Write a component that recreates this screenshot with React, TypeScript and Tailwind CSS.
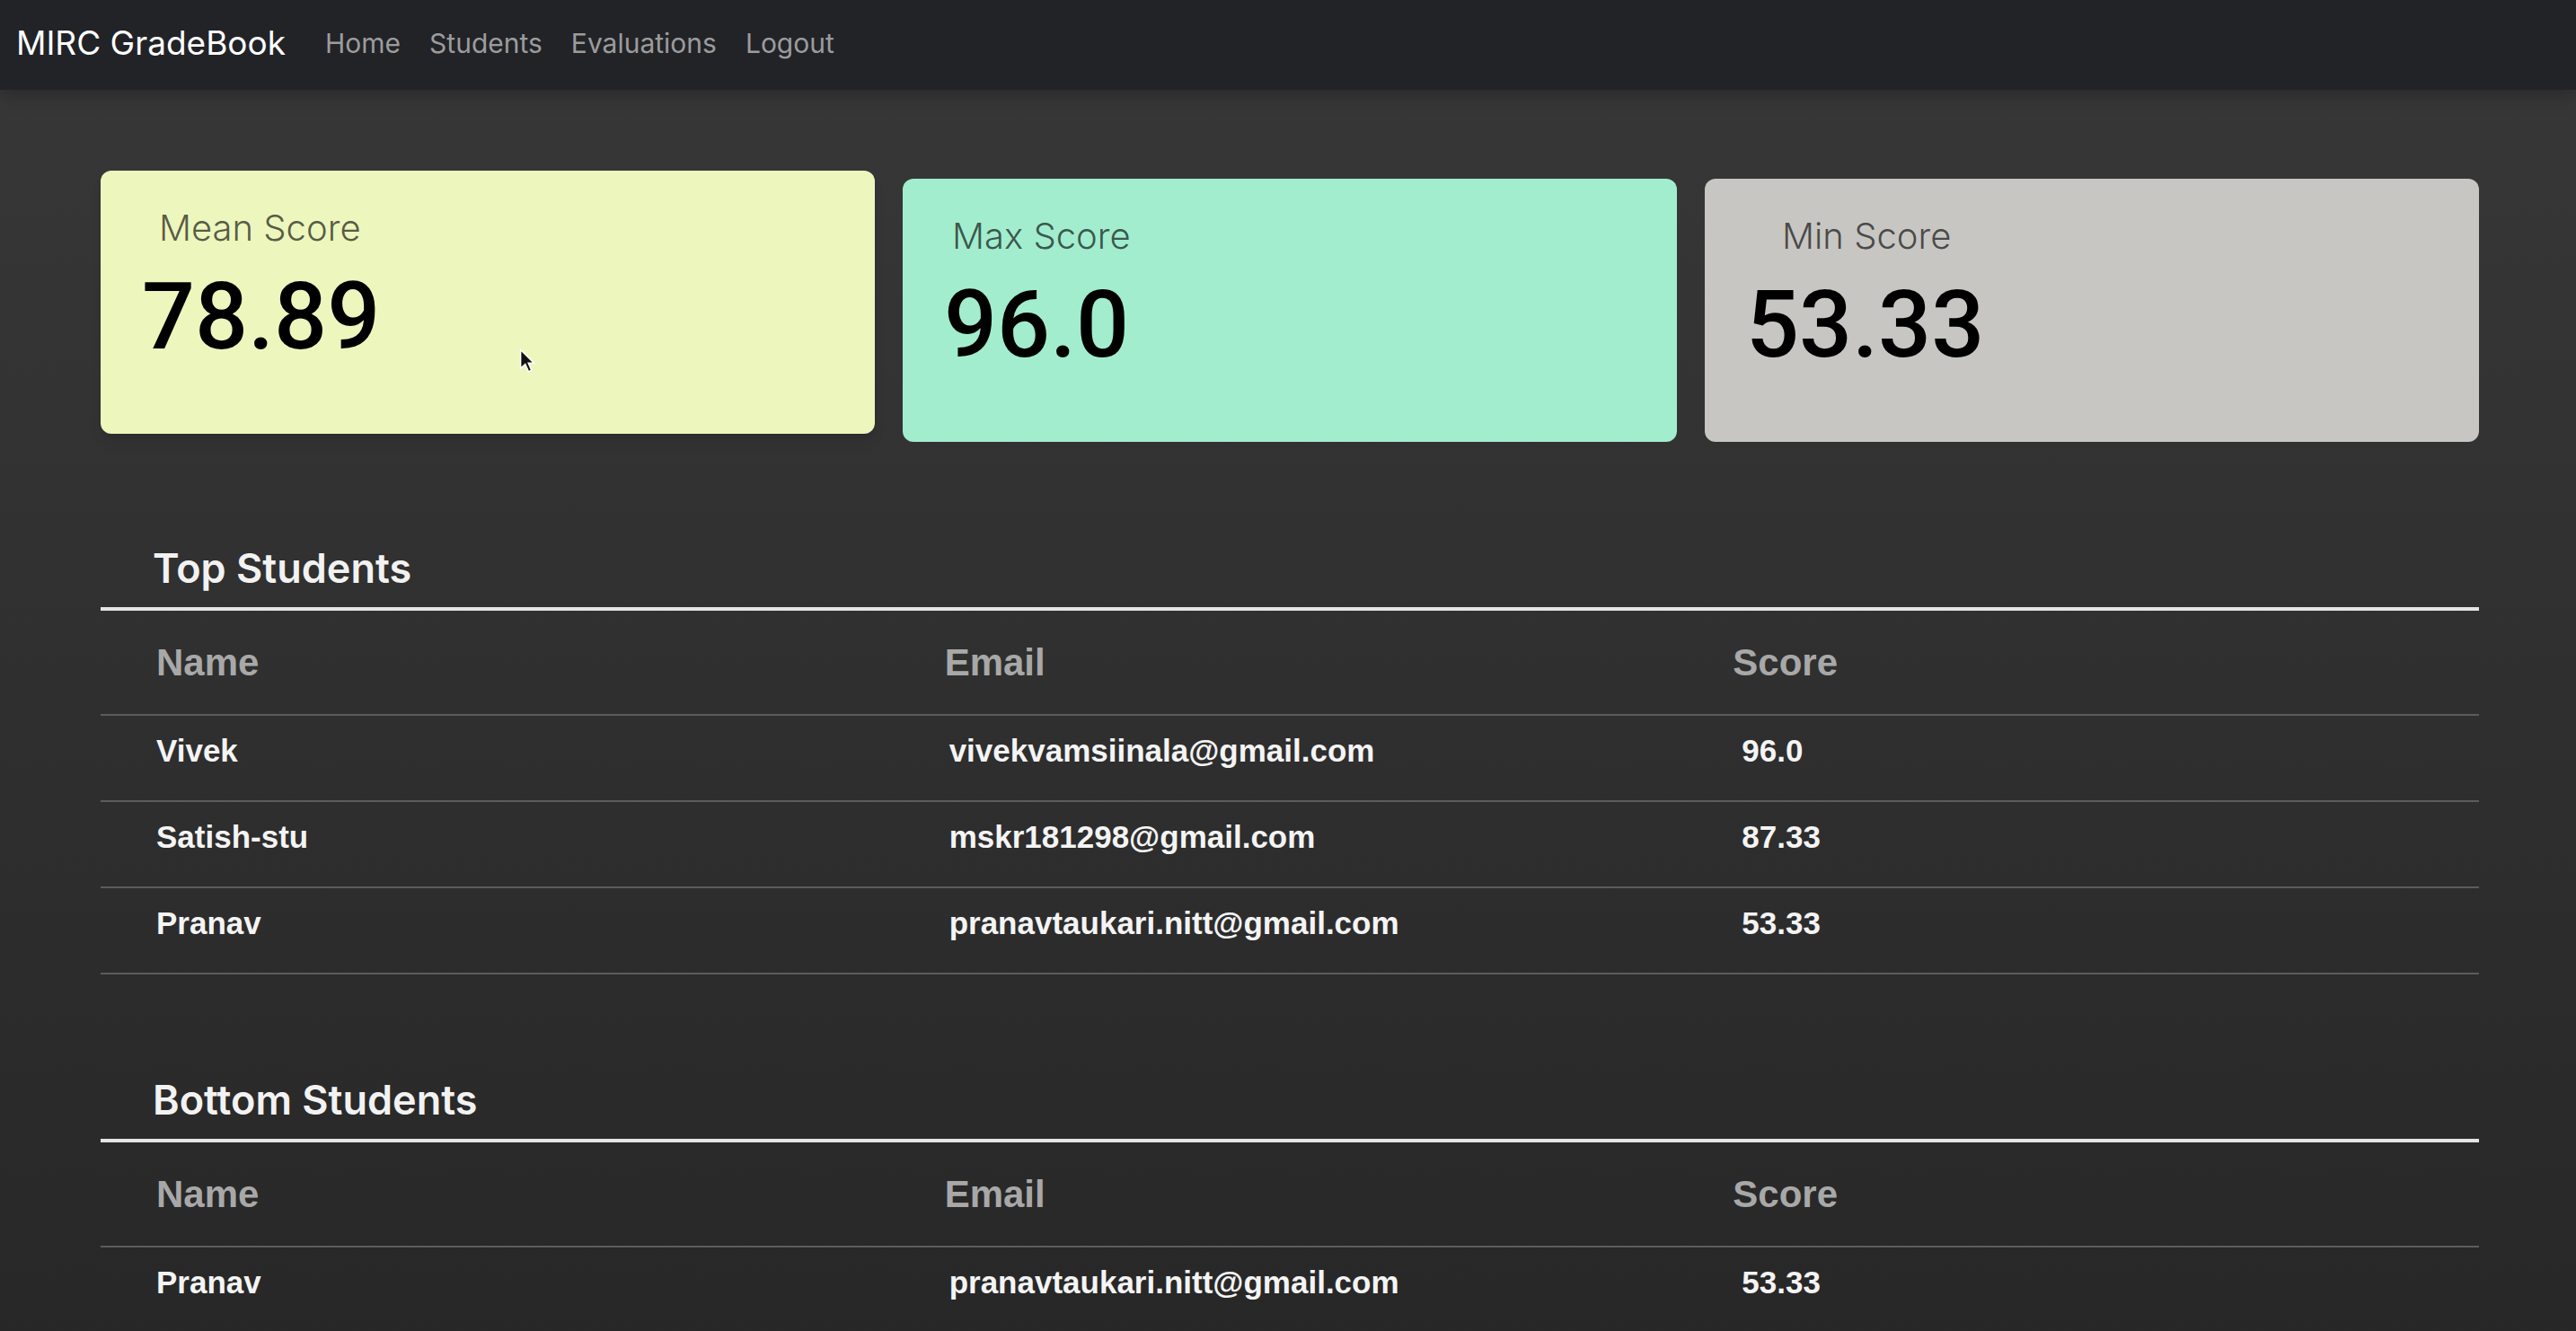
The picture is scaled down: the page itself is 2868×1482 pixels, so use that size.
import React from 'react';

const sans = { fontFamily: 'Inter, "Noto Sans", sans-serif' };
const helv = { fontFamily: '"Liberation Sans", Arial, sans-serif' };
const nums = { fontFamily: 'Roboto, "Liberation Sans", Arial, sans-serif' };

const stats = [
  { label: 'Mean Score', value: '78.89', bg: 'bg-[#edf6bd]', labelPad: 'pl-[65px]', lift: true },
  { label: 'Max Score', value: '96.0', bg: 'bg-[#a2edce]', labelPad: 'pl-[55px]', lift: false },
  { label: 'Min Score', value: '53.33', bg: 'bg-[#c7c6c2]', labelPad: 'pl-[86px]', lift: false },
];

const topStudents = [
  { name: 'Vivek', email: 'vivekvamsiinala@gmail.com', score: '96.0' },
  { name: 'Satish-stu', email: 'mskr181298@gmail.com', score: '87.33' },
  { name: 'Pranav', email: 'pranavtaukari.nitt@gmail.com', score: '53.33' },
];

const bottomStudents = [
  { name: 'Pranav', email: 'pranavtaukari.nitt@gmail.com', score: '53.33' },
];

const StatCard = ({ label, value, bg, labelPad, lift }: (typeof stats)[number]) => (
  <div className={`relative h-[293px] rounded-[12px] ${bg} ${lift ? '-translate-y-[9px] shadow-lg' : ''}`}>
    <div className={`pt-[38px] ${labelPad} text-[40px] font-light leading-[52px] text-black/65`} style={sans}>
      {label}
    </div>
    <div className="pl-[46px] mt-[18px] text-[104px] font-medium leading-[110px] text-black" style={nums}>
      {value}
    </div>
    {lift && (
      <svg className="absolute left-[466px] top-[198px]" width="18" height="28" viewBox="0 0 12 19">
        <path d="M1 1 L1 15 L4.5 11.8 L7 17.5 L9.2 16.5 L6.8 11 L11 11 Z" fill="#111" stroke="#fff" strokeWidth="1" />
      </svg>
    )}
  </div>
);

const StudentTable = ({ title, rows }: { title: string; rows: typeof topStudents }) => (
  <section>
    <h4 className="pl-[58px] text-[45px] font-semibold leading-[52px] text-[#f2f2f2] mb-[17px]" style={sans}>
      {title}
    </h4>
    <div className="h-[4px] bg-[#e4e4e4]" />
    <div className="grid grid-cols-3 h-[117px] items-center border-b-2 border-[#5c5c5c] text-[42px] font-bold text-[#a8a8a8]" style={helv}>
      <div className="pl-[62px]">Name</div>
      <div className="pl-[57px]">Email</div>
      <div className="pl-[52px]">Score</div>
    </div>
    {rows.map((r) => (
      <div
        key={r.name + r.email}
        className="grid grid-cols-3 h-[96px] pt-[21px] border-b-2 border-[#5c5c5c] text-[35px] leading-[36px] font-bold text-[#f4f4f4]"
        style={helv}
      >
        <div className="pl-[62px]">{r.name}</div>
        <div className="pl-[62px]">{r.email}</div>
        <div className="pl-[62px]">{r.score}</div>
      </div>
    ))}
  </section>
);

export default function App() {
  return (
    <div className="min-h-screen w-full bg-gradient-to-b from-[#383838] to-[#272727]">
      <nav className="h-[100px] flex items-center pl-[18px] pb-[4px] bg-[#222327] shadow-[0_6px_18px_rgba(0,0,0,0.25)]" style={sans}>
        <span className="text-[37px] text-white mr-[28px]">MIRC GradeBook</span>
        {['Home', 'Students', 'Evaluations', 'Logout'].map((l) => (
          <span key={l} className="px-[16px] text-[30px] text-[#9c9c9c]">
            {l}
          </span>
        ))}
      </nav>
      <main className="pl-[112px] pr-[108px] pt-[99px] pb-[40px]">
        <div className="grid grid-cols-3 gap-[31px]">
          {stats.map((s) => (
            <StatCard key={s.label} {...s} />
          ))}
        </div>
        <div className="mt-[115px]">
          <StudentTable title="Top Students" rows={topStudents} />
        </div>
        <div className="mt-[114px]">
          <StudentTable title="Bottom Students" rows={bottomStudents} />
        </div>
      </main>
    </div>
  );
}
